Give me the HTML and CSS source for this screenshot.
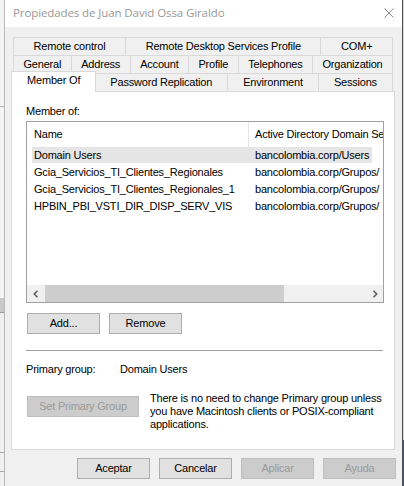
FILE: index.html
```html
<!DOCTYPE html>
<html lang="es">
<head>
<meta charset="utf-8">
<title>Propiedades de Juan David Ossa Giraldo</title>
<link rel="stylesheet" href="styles.css">
</head>
<body>
<div class="desk-left"></div>
<div class="window">
  <div class="titlebar">
    <span class="title">Propiedades de Juan David Ossa Giraldo</span>
    <svg class="close" width="10" height="10" viewBox="0 0 10 10"><path d="M0.5 0.5L9.5 9.5M9.5 0.5L0.5 9.5" stroke="#8c8c8c" stroke-width="1" fill="none"/></svg>
  </div>
  <div class="content">
    <div class="tabs">
      <div class="tabrow">
        <div class="tab">Remote control</div>
        <div class="tab">Remote Desktop Services Profile</div>
        <div class="tab">COM+</div>
      </div>
      <div class="tabrow">
        <div class="tab">General</div>
        <div class="tab">Address</div>
        <div class="tab">Account</div>
        <div class="tab">Profile</div>
        <div class="tab">Telephones</div>
        <div class="tab">Organization</div>
      </div>
      <div class="tabrow front">
        <div class="tab selected">Member Of</div>
        <div class="tab">Password Replication</div>
        <div class="tab">Environment</div>
        <div class="tab">Sessions</div>
      </div>
    </div>
    <div class="panel">
      <div class="label">Member of:</div>
      <div class="listview">
        <div class="lv-header">
          <div class="lv-hcol first">Name</div>
          <div class="lv-hcol">Active Directory Domain Services Folder</div>
        </div>
        <div class="lv-rows">
          <div class="lv-row sel"><span class="c1">Domain Users</span><span class="c2">bancolombia.corp/Users</span></div>
          <div class="lv-row"><span class="c1">Gcia_Servicios_TI_Clientes_Regionales</span><span class="c2">bancolombia.corp/Grupos/</span></div>
          <div class="lv-row"><span class="c1">Gcia_Servicios_TI_Clientes_Regionales_1</span><span class="c2">bancolombia.corp/Grupos/</span></div>
          <div class="lv-row"><span class="c1">HPBIN_PBI_VSTI_DIR_DISP_SERV_VIS</span><span class="c2">bancolombia.corp/Grupos/</span></div>
        </div>
        <div class="hscroll">
          <div class="sb-btn"><svg width="8" height="8" viewBox="0 0 8 8"><path d="M5.5 0.8L2.3 4L5.5 7.2" stroke="#606060" stroke-width="1.6" fill="none"/></svg></div>
          <div class="sb-track"><div class="sb-thumb"></div></div>
          <div class="sb-btn"><svg width="8" height="8" viewBox="0 0 8 8"><path d="M2.5 0.8L5.7 4L2.5 7.2" stroke="#606060" stroke-width="1.6" fill="none"/></svg></div>
        </div>
      </div>
      <div class="btnrow">
        <button class="btn">Add...</button>
        <button class="btn">Remove</button>
      </div>
      <div class="sep"></div>
      <div class="pg">
        <span class="pg-label">Primary group:</span>
        <span>Domain Users</span>
      </div>
      <div class="pg-set">
        <button class="btn wide" disabled>Set Primary Group</button>
        <p class="note">There is no need to change Primary group unless<br>you have Macintosh clients or POSIX-compliant<br>applications.</p>
      </div>
    </div>
    <div class="footer">
      <button class="btn">Aceptar</button>
      <button class="btn">Cancelar</button>
      <button class="btn" disabled>Aplicar</button>
      <button class="btn" disabled>Ayuda</button>
    </div>
  </div>
</div>
<div class="desk-right"></div>
</body>
</html>
```

FILE: styles.css
```css
html, body {
  margin: 0;
  padding: 0;
}

body {
  width: 404px;
  height: 486px;
  overflow: hidden;
  display: flex;
  background: #f0f0f0;
  font-family: "Liberation Sans", Arial, sans-serif;
  font-size: 11px;
  letter-spacing: -0.2px;
  color: #000;
}

.desk-left {
  width: 4px;
  border-right: 1px solid #b9b9b9;
  background: linear-gradient(to bottom,
    #f4f4f4 0, #f4f4f4 106px, #b0b0b0 106px, #b0b0b0 107px,
    #f4f4f4 107px, #f4f4f4 298px, #c8c8c8 298px, #c8c8c8 312px,
    #9a9a9a 312px, #9a9a9a 313px, #f0f0f0 313px, #f0f0f0 452px,
    #a8a8a8 452px, #a8a8a8 453px, #f0f0f0 453px, #f0f0f0 471px,
    #a8a8a8 471px, #a8a8a8 472px, #f0f0f0 472px);
}

.desk-right {
  width: 1px;
  background: linear-gradient(to bottom, #d8d8d8 0, #d8d8d8 440px, #1f6480 440px);
}

.window {
  width: 397px;
  display: flex;
  flex-direction: column;
  background: #f0f0f0;
  border-right: 1px solid #505050;
}

.titlebar {
  height: 27px;
  flex: none;
  background: #fff;
  display: flex;
  align-items: center;
  justify-content: space-between;
  padding: 0 8px 2px 8px;
  box-sizing: border-box;
}

.title {
  font-family: "Open Sans", "Noto Sans", sans-serif;
  font-size: 11.5px;
  color: #999;
  letter-spacing: -0.1px;
}

.close {
  display: block;
  margin-top: 1px;
}

.content {
  display: flex;
  flex-direction: column;
  padding: 10px 6px 0 6px;
}

.tabs {
  margin: 0 3px 0 2px;
  display: flex;
  flex-direction: column;
}

.tabrow {
  display: flex;
  height: 18px;
}

.tab {
  flex: 1 1 auto;
  box-sizing: border-box;
  border-top: 1px solid #d9d9d9;
  border-left: 1px solid #d9d9d9;
  text-align: center;
  line-height: 17px;
  white-space: nowrap;
  background: #f0f0f0;
}

.tab:last-child {
  border-right: 1px solid #d9d9d9;
}

.front .tab {
  line-height: 16px;
}

.tab.selected {
  position: relative;
  z-index: 1;
  margin: -2px -2px -1px -2px;
  background: #fff;
  border-right: 1px solid #d9d9d9;
  line-height: 17px;
}

.panel {
  height: 359px;
  box-sizing: border-box;
  margin-right: 1px;
  border: 1px solid #d9d9d9;
  background: #fff;
  padding: 0 10px 0 14px;
  display: flex;
  flex-direction: column;
}

.label {
  margin-top: 13px;
  line-height: 13px;
}

.listview {
  margin-top: 3px;
  width: 358px;
  height: 182px;
  box-sizing: border-box;
  border: 1px solid #a0a0a0;
  display: flex;
  flex-direction: column;
  overflow: hidden;
}

.lv-header {
  height: 25px;
  flex: none;
  display: flex;
  white-space: nowrap;
}

.lv-hcol {
  line-height: 25px;
  padding-left: 6px;
}

.lv-hcol.first {
  width: 222px;
  flex: none;
  box-sizing: border-box;
  padding-left: 7px;
  border-right: 1px solid #e5e5e5;
}

.lv-rows {
  flex: 1;
}

.lv-row {
  margin-left: 5px;
  width: 340px;
  height: 17px;
  line-height: 17px;
  display: flex;
  white-space: nowrap;
}

.lv-row.sel {
  background: #e5e5e5;
  height: 16px;
  line-height: 16px;
  margin-bottom: 1px;
}

.c1 {
  width: 221px;
  flex: none;
  padding-left: 2px;
  box-sizing: border-box;
}

.c2 {
  padding-left: 2px;
}

.hscroll {
  height: 17px;
  flex: none;
  display: flex;
  background: #f0f0f0;
}

.sb-btn {
  width: 17px;
  display: flex;
  align-items: center;
  justify-content: center;
}

.sb-btn svg {
  display: block;
}

.sb-track {
  flex: 1;
  display: flex;
}

.sb-thumb {
  width: 239px;
  margin-left: 1px;
  background: #cdcdcd;
}

.btn {
  width: 73px;
  height: 21px;
  box-sizing: border-box;
  padding: 0;
  border: 1px solid #adadad;
  background: #e1e1e1;
  font-family: "Liberation Sans", Arial, sans-serif;
  font-size: 11px;
  letter-spacing: -0.2px;
  color: #000;
  line-height: 19px;
}

.btn:disabled {
  background: #cccccc;
  border-color: #bfbfbf;
  color: #9a9a9a;
}

.btn.wide {
  width: 112px;
}

.btnrow {
  margin-top: 10px;
  margin-left: 1px;
  display: flex;
  gap: 9px;
}

.sep {
  margin-top: 16px;
  width: 357px;
  height: 1px;
  background: #a0a0a0;
}

.pg {
  margin-top: 12px;
  display: flex;
  line-height: 13px;
}

.pg-label {
  width: 94px;
}

.pg-set {
  margin-top: 16px;
  display: flex;
  align-items: flex-start;
}

.pg-set .btn {
  margin-top: 4px;
  margin-left: 1px;
}

.note {
  margin: 0 0 0 11px;
  line-height: 13px;
  white-space: nowrap;
}

.footer {
  margin-top: 8px;
  display: flex;
  justify-content: flex-end;
  gap: 9px;
}
```
